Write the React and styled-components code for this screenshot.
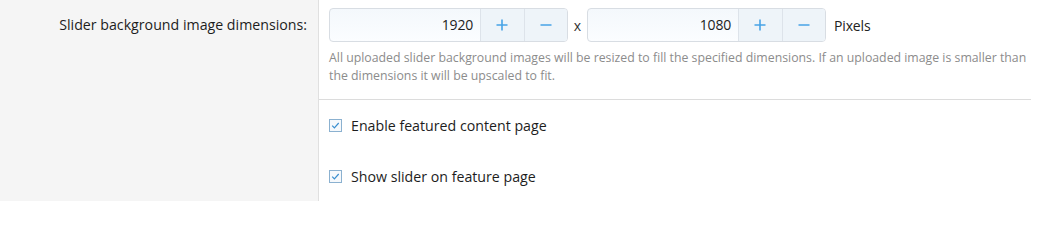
import React from 'react'
import styled, { createGlobalStyle } from 'styled-components'

const GlobalStyle = createGlobalStyle`
  html, body {
    margin: 0;
    padding: 0;
    background: #fff;
  }
  body {
    font-family: 'Open Sans', 'Noto Sans', sans-serif;
    color: #141414;
  }
`

const Form = styled.div`
  width: 1039px;
  height: 201px;
  overflow: hidden;
  display: grid;
  grid-template-columns: 319px 1fr;
  grid-template-rows: 99px 1fr;
`

const Label = styled.div`
  background: #f5f5f5;
  border-right: 1px solid #e0e0e0;
  text-align: right;
  padding: 15px 11px 0 0;
  font-size: 14.2px;
  color: #1d1d1d;
`

const Content = styled.div`
  padding: ${(p) => (p.$top ? '8px 0 0 10px' : '12px 0 0 10px')};
  margin-right: 8px;
  border-top: ${(p) => (p.$top ? 'none' : '1px solid #dcdcdc')};
`

const InputLine = styled.div`
  display: flex;
  align-items: center;
`

const Spinner = styled.div`
  display: flex;
  width: 239px;
  height: 34px;
  box-sizing: border-box;
  border: 1px solid #d8dde3;
  border-radius: 4px;
  overflow: hidden;
  background: linear-gradient(to bottom, #f4f8fc, #fbfdff);
`

const Value = styled.div`
  flex: 0 0 150px;
  box-sizing: border-box;
  text-align: right;
  padding-right: 7px;
  line-height: 32px;
  font-size: 14px;
  letter-spacing: -0.2px;
  color: #222;
`

const StepButton = styled.div`
  flex: 1;
  display: flex;
  align-items: center;
  justify-content: center;
  background: #eef4f9;
  border-left: 1px solid #dde3ea;
  color: #47a3e6;
`

const Sep = styled.span`
  width: 19px;
  text-align: center;
  font-size: 14px;
  color: #333;
`

const Unit = styled.span`
  margin-left: 8px;
  font-size: 14px;
  letter-spacing: -0.15px;
  color: #222;
`

const Hint = styled.p`
  margin: 7px 0 0;
  font-size: 12.3px;
  line-height: 18px;
  color: #8c8c8c;
`

const CheckRow = styled.label`
  display: flex;
  align-items: center;
  gap: 9px;
  height: 26px;
  margin-bottom: 25px;
  font-size: 14.2px;
  color: #1d1d1d;
`

const Box = styled.span`
  width: 13px;
  height: 13px;
  box-sizing: border-box;
  border: 1px solid #8bb1d0;
  background: #f6f9fc;
  display: flex;
  align-items: center;
  justify-content: center;
`

const Plus = () => (
  <svg width="12" height="12" viewBox="0 0 12 12">
    <path d="M6 0.5v11M0.5 6h11" stroke="currentColor" strokeWidth="1.6" />
  </svg>
)

const Minus = () => (
  <svg width="12" height="12" viewBox="0 0 12 12">
    <path d="M0.5 6h11" stroke="currentColor" strokeWidth="1.6" />
  </svg>
)

const Tick = () => (
  <svg width="9" height="9" viewBox="0 0 9 9">
    <path d="M1.2 4.6l2.2 2.2 4.3-4.8" fill="none" stroke="#3a8fd0" strokeWidth="1.2" />
  </svg>
)

const NumberBox = ({ value }) => (
  <Spinner>
    <Value>{value}</Value>
    <StepButton><Plus /></StepButton>
    <StepButton><Minus /></StepButton>
  </Spinner>
)

const Check = ({ children }) => (
  <CheckRow>
    <Box><Tick /></Box>
    {children}
  </CheckRow>
)

export default function App() {
  return (
    <>
      <GlobalStyle />
      <Form>
        <Label>Slider background image dimensions:</Label>
        <Content $top>
          <InputLine>
            <NumberBox value="1920" />
            <Sep>x</Sep>
            <NumberBox value="1080" />
            <Unit>Pixels</Unit>
          </InputLine>
          <Hint>
            All uploaded slider background images will be resized to fill the specified dimensions. If an uploaded image is smaller than the dimensions it will be upscaled to fit.
          </Hint>
        </Content>
        <Label />
        <Content>
          <Check>Enable featured content page</Check>
          <Check>Show slider on feature page</Check>
        </Content>
      </Form>
    </>
  )
}
